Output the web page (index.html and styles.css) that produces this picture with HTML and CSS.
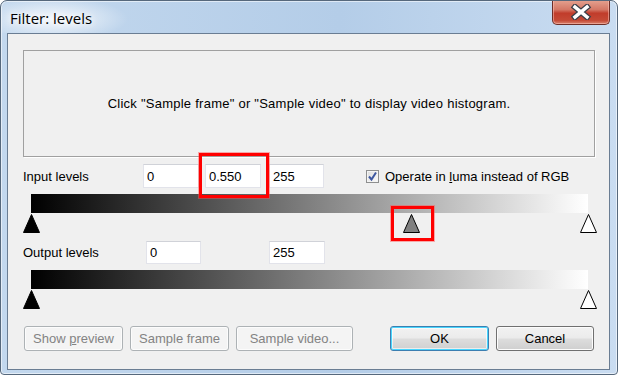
FILE: index.html
```html
<html>
    <head>
        <meta name="viewport" content="width=device-width, initial-scale=1.0">
        <link rel="stylesheet" href="styles.css">
    </head>
    <body>
        <div class="window">
            <div class="titlebar">
                <span class="title">Filter: levels</span>
                <button class="close">
                    <svg width="22" height="16" viewBox="0 0 22 16">
                        <path d="M5 3 L17 13 M17 3 L5 13" stroke="#3b3f49" stroke-width="6" stroke-linecap="square" />
                        <path d="M5 3 L17 13 M17 3 L5 13" stroke="#fff" stroke-width="3.5" stroke-linecap="square" />
                    </svg>
                </button>
            </div>
            <div class="client">
                <div class="histogram">Click "Sample frame" or "Sample video" to display video histogram.</div>

                <div class="row row-input">
                    <span class="label">Input levels</span>
                    <input class="field field-a" value="0" />
                    <span class="mark mark-field">
                        <input class="field field-b" value="0.550" />
                    </span>
                    <input class="field field-c" value="255" />
                    <label class="check">
                        <span class="box">
                            <svg width="11" height="11" viewBox="0 0 11 11">
                                <path d="M2 5.5 L4.5 8.5 L9 1.5" stroke="#3d57a0" stroke-width="2" fill="none" />
                            </svg>
                        </span>
                        <span>Operate in <u>l</u>uma instead of RGB</span>
                    </label>
                </div>

                <div class="slider">
                    <div class="bar"></div>
                    <div class="handles">
                        <span class="handle" style="left: 0%">
                            <svg width="17" height="19" viewBox="0 0 17 19"><path d="M8.5 0.5 L16.5 18.5 L0.5 18.5 Z" fill="#000" stroke="#000" /></svg>
                        </span>
                        <span class="handle mark mark-handle" style="left: 68.2%">
                            <svg width="17" height="19" viewBox="0 0 17 19"><path d="M8.5 0.5 L16.5 18.5 L0.5 18.5 Z" fill="#808080" stroke="#000" /></svg>
                        </span>
                        <span class="handle" style="left: 100%">
                            <svg width="17" height="19" viewBox="0 0 17 19"><path d="M8.5 0.5 L16.5 18.5 L0.5 18.5 Z" fill="#fff" stroke="#000" /></svg>
                        </span>
                    </div>
                </div>

                <div class="row row-output">
                    <span class="label">Output levels</span>
                    <input class="field field-d" value="0" />
                    <input class="field field-e" value="255" />
                </div>

                <div class="slider">
                    <div class="bar"></div>
                    <div class="handles">
                        <span class="handle" style="left: 0%">
                            <svg width="17" height="19" viewBox="0 0 17 19"><path d="M8.5 0.5 L16.5 18.5 L0.5 18.5 Z" fill="#000" stroke="#000" /></svg>
                        </span>
                        <span class="handle" style="left: 100%">
                            <svg width="17" height="19" viewBox="0 0 17 19"><path d="M8.5 0.5 L16.5 18.5 L0.5 18.5 Z" fill="#fff" stroke="#000" /></svg>
                        </span>
                    </div>
                </div>

                <div class="buttons">
                    <button class="btn btn-off w-preview">Show <u>p</u>review</button>
                    <button class="btn btn-off w-frame">Sample frame</button>
                    <button class="btn btn-off w-video">Sample video...</button>
                    <button class="btn btn-default w-ok">OK</button>
                    <button class="btn w-cancel">Cancel</button>
                </div>
            </div>
        </div>
    </body>
</html>
```

FILE: styles.css
```css
body{
    margin: 0;
    font-family: "Liberation Sans", Arial, sans-serif;
    font-size: 13px;
    color: #000;
    background: #fff;
}
.window{
    width: 618px;
    height: 375px;
    box-sizing: border-box;
    border: 1px solid #56687c;
    border-radius: 7px 7px 4px 4px;
    background: linear-gradient(to right, #c3d8ee, #b4cde8 55%, #c9dcf1);
    box-shadow: inset 0 0 0 1px rgba(255,255,255,0.55);
    display: flex;
    flex-direction: column;
    overflow: hidden;
}
.titlebar{
    height: 32px;
    display: flex;
    align-items: flex-start;
    background: radial-gradient(ellipse 75px 22px at 52px 18px, rgba(255,255,255,0.85), rgba(255,255,255,0));
}
.title{
    font-family: "Open Sans", sans-serif;
    font-size: 15px;
    margin: 7px 0 0 9px;
    line-height: 20px;
    text-shadow: 0 0 6px #fff, 0 0 10px #fff;
}
.close{
    margin: -1px 7px 0 auto;
    width: 58px;
    height: 25px;
    padding: 0;
    border: 1px solid #6e2e27;
    border-top: none;
    border-radius: 0 0 5px 5px;
    background: linear-gradient(#e5a391 0%, #d47866 40%, #c13c2b 55%, #c54a36 85%, #d9826d 100%);
    box-shadow: inset 0 0 0 1px rgba(255,200,190,0.5);
    display: flex;
    align-items: center;
    justify-content: center;
}
.client{
    flex: 1;
    margin: 0 7px 4px 6px;
    border: 1px solid #6a7d93;
    background: #f0f0f0;
    display: flex;
    flex-direction: column;
}
.histogram{
    margin: 16px 14px 0 15px;
    height: 107px;
    box-sizing: border-box;
    border: 1px solid #a0a0a0;
    box-shadow: 1px 1px 0 #fff;
    display: flex;
    align-items: center;
    justify-content: center;
    letter-spacing: 0.25px;
}
.row{
    display: flex;
    align-items: center;
    padding-left: 15px;
}
.row-input{
    margin-top: 7px;
    height: 24px;
}
.row-output{
    margin-top: 8px;
    height: 23px;
}
.label{
    width: 120px;
}
.row-output .label{
    width: 123px;
}
.field{
    box-sizing: border-box;
    height: 24px;
    border: 1px solid #e2e3ea;
    border-top-color: #d0d2d8;
    background: #fff;
    font-family: "Liberation Sans", Arial, sans-serif;
    font-size: 13px;
    padding: 0 3px;
    margin: 0;
    outline: none;
}
.row-output .field{
    height: 23px;
}
.field-a{ width: 56px; }
.field-b{ width: 56px; }
.field-c{ width: 55px; margin-left: 8px; }
.field-d{ width: 55px; }
.field-e{ width: 56px; margin-left: 68px; }
.mark{
    position: relative;
    display: inline-block;
}
.mark::after{
    content: "";
    position: absolute;
    border: 3px solid #f00;
    box-shadow: 0 0 0 1px rgba(255,80,80,0.45);
}
.mark-field{
    margin-left: 6px;
    height: 24px;
}
.mark-field::after{
    top: -11px;
    bottom: -10px;
    left: -6px;
    right: -8px;
}
.mark-handle::after{
    top: -8px;
    bottom: -8px;
    left: -12px;
    right: -14px;
}
.check{
    margin-left: 42px;
    display: flex;
    align-items: center;
    gap: 6px;
}
.box{
    width: 13px;
    height: 13px;
    box-sizing: border-box;
    border: 1px solid #8e8f8f;
    background: linear-gradient(135deg, #dcdcdc, #fbfbfb);
    box-shadow: inset 0 0 0 1px #f4f4f4;
    display: flex;
    align-items: center;
    justify-content: center;
}
.slider{
    margin: 6px 0 0 23px;
    width: 557px;
}
.bar{
    height: 19px;
    background: linear-gradient(to right, #000, #fff);
}
.handles{
    position: relative;
    height: 20px;
}
.handle{
    position: absolute;
    top: 1px;
    margin-left: -8px;
    width: 17px;
    height: 19px;
}
.handle svg{
    display: block;
}
.buttons{
    margin-top: 17px;
    padding: 0 15px 0 16px;
    display: flex;
    gap: 7px;
}
.btn{
    height: 25px;
    box-sizing: border-box;
    border: 1px solid #707070;
    border-radius: 3px;
    background: linear-gradient(#f2f2f2 0%, #ebebeb 48%, #dddddd 52%, #cfcfcf 100%);
    box-shadow: inset 0 0 0 1px #fcfcfc;
    font-family: "Liberation Sans", Arial, sans-serif;
    font-size: 13px;
    color: #000;
    padding: 0;
}
.btn-off{
    border-color: #adb2b5;
    background: #f4f4f4;
    color: #838383;
}
.btn-default{
    border-color: #3c7fb1;
    box-shadow: inset 0 0 0 1px #48d5fd, inset 0 0 0 2px rgba(255,255,255,0.6);
}
.w-preview{ width: 99px; }
.w-frame{ width: 99px; }
.w-video{ width: 117px; }
.w-ok{ width: 99px; margin-left: auto; }
.w-cancel{ width: 98px; }
```
